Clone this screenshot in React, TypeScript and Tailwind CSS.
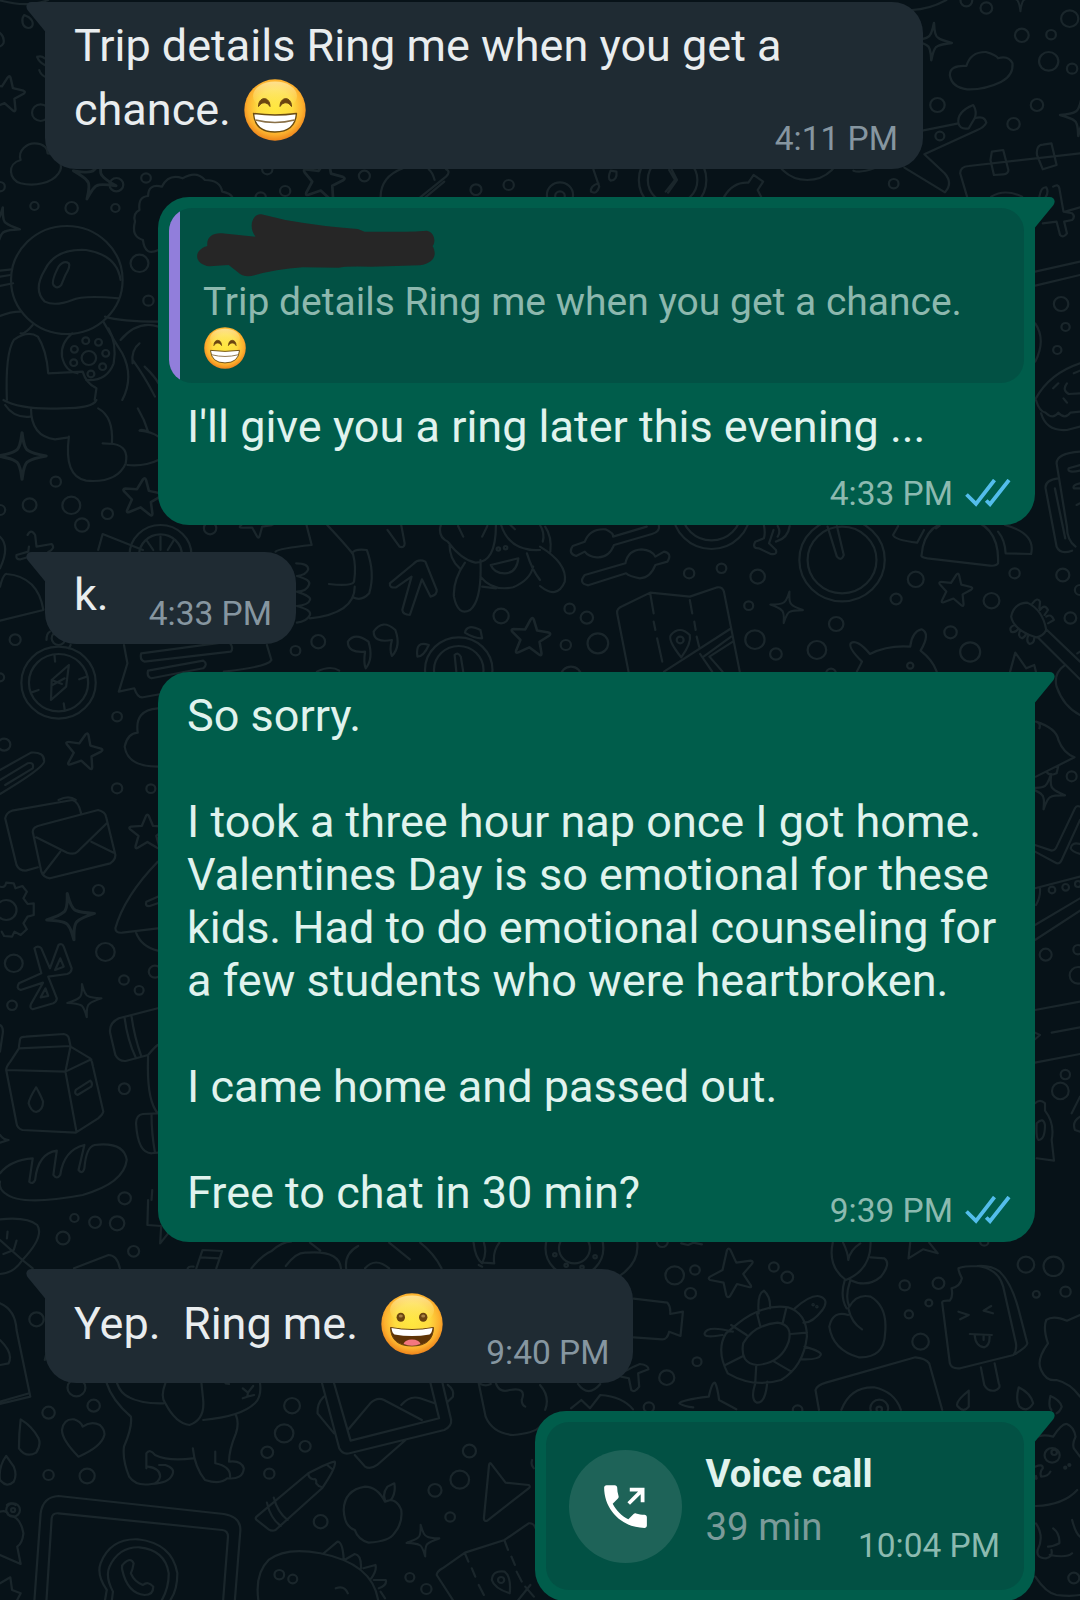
import type { ReactNode } from "react";

type Dot = [number, number, number];
type Mark = [number, number, number, number];

function Doodles({ transform, dots = [], stars = [], sparkles = [], paths = [] }: {
  transform: string;
  dots?: Dot[];
  stars?: Mark[];
  sparkles?: Mark[];
  paths?: string[];
}) {
  return (
    <g transform={transform}>
      {dots.map(([x, y, r]) => (
        <circle key={`${x}-${y}`} cx={x} cy={y} r={r} />
      ))}
      {stars.map(([x, y, r, a]) => (
        <path
          key={`${x}-${y}`}
          transform={`translate(${x} ${y}) rotate(${a}) scale(${r / 50})`}
          d="M-4-46Q0-54 4-46L15-19L44-17Q52-15 46-9L24 9L32 38Q33 46 26 42L0 26L-26 42Q-33 46-32 38L-24 9L-46-9Q-52-15-44-17L-15-19Z"
        />
      ))}
      {sparkles.map(([x, y, r, a]) => (
        <path
          key={`${x}-${y}`}
          transform={`translate(${x} ${y}) rotate(${a}) scale(${r / 50})`}
          d="M0-50Q4-14 14-11Q20-6 50 0Q20 6 14 11Q4 14 0 50Q-4 14-14 11Q-20 6-50 0Q-20-6-14-11Q-4-14 0-50Z"
        />
      ))}
      {paths.map((d) => (
        <path key={d} d={d} />
      ))}
    </g>
  );
}

function Wallpaper() {
  return (
    <svg
      className="absolute inset-0"
      width="1080"
      height="1600"
      viewBox="0 0 1080 1600"
      fill="none"
      stroke="#1a262b"
      strokeWidth="6.5"
      strokeLinecap="round"
      strokeLinejoin="round"
    >
      <Doodles
        transform="matrix(.3444 0 0 .3333 0 0)"
        dots={[
          [118, 338, 25], [338, 554, 20], [424, 534, 14], [208, 624, 18], [100, 618, 12], [335, 624, 12],
          [405, 790, 26], [431, 902, 15], [258, 1074, 21], [249, 1022, 10], [286, 1027, 10], [307, 1060, 10],
          [298, 1100, 10], [264, 1122, 10], [214, 1088, 10], [216, 1048, 10], [828, 573, 15], [1058, 528, 16],
          [1382, 569, 16], [1477, 555, 15], [776, 508, 15], [757, 592, 15], [0, 560, 14], [194, 840, 162],
        ]}
        stars={[[18, 282, 54, 10], [938, 540, 62, 12]]}
        sparkles={[[275, 535, 66, 20], [0, 680, 58, 8]]}
        paths={[
          "M70 45C60 60 65 82 82 84C98 82 100 65 84 52Z",
          "M-5 95Q15 110 10 130Q5 140-5 140",
          "M108 170Q112 185 130 195M130 175Q118 165 108 172M114 210Q118 225 134 232",
          "M60 480C50 450 80 430 100 430C130 430 140 450 138 460C175 460 185 500 170 520C150 550 100 560 60 550C25 540 20 490 60 480Z",
          "M460 750Q420 770 415 720Q380 710 392 665Q385 640 405 630Q400 590 430 588Q430 550 470 560Q490 520 530 535Q570 510 595 540Q640 540 645 575Q670 580 675 592",
          "M-5 0Q80 25 140 0",
          "M1105 592Q1105 530 1170 505M1220 592L1295 530Q1310 515 1295 508M1235 592L1290 545M1262 540Q1255 515 1245 508",
          "M350 840Q340 765 250 750Q160 745 130 810Q95 870 130 905Q160 920 210 900Q240 885 345 895",
          "M158 858Q145 850 170 800Q185 780 200 790Q205 800 190 825L178 855Q165 868 158 858Z",
          "M0 812L35 808M0 858L38 850M0 830L30 825",
          "M0 948Q30 935 60 935M300 965Q330 1020 355 1060Q390 1130 355 1200M95 975Q70 1005 60 1000",
          "M20 1200Q15 1060 40 1020Q80 990 110 1010Q135 1050 140 1120L240 1115Q250 1150 280 1165L275 1200",
          "M180 1070Q175 1030 210 1000M180 1070Q190 1115 225 1120M315 985Q340 1030 330 1090Q310 1145 250 1140",
          "M305 950Q350 965 460 965M350 1020Q400 960 460 980M385 1090Q380 1050 405 1030M420 1100Q450 1130 460 1150M385 1080Q420 1130 450 1190",
        ]}
      />
      <Doodles
        transform="matrix(.3444 0 0 .3333 540 0)"
        dots={[
          [1238, 2, 17], [1296, 24, 17], [1399, 106, 20], [1484, 104, 14], [1538, 56, 25], [1477, 184, 28],
          [1545, 206, 15], [1154, 315, 21], [1443, 315, 18], [1375, 372, 18], [1161, 408, 13], [1027, 551, 14],
          [58, 585, 38], [58, 588, 14], [385, 540, 98], [385, 540, 72], [776, 440, 100], [1513, 912, 21],
          [1526, 981, 12], [1502, 1050, 12],
        ]}
        sparkles={[[1140, 125, 56, 4], [1395, -12, 46, 0], [1568, 350, 58, 5]]}
        paths={[
          "M1080 30Q1130 28 1180 0",
          "M1238 198Q1250 155 1295 156Q1325 165 1330 175Q1360 165 1372 190Q1375 225 1340 245Q1290 270 1240 268Q1195 262 1190 225Q1190 195 1238 198Z",
          "M1110 392L1215 370Q1210 335 1258 315Q1270 335 1262 355Q1290 345 1296 368Q1290 382 1270 390L1116 463L1175 520Q1200 550 1176 577L1058 503M1215 370Q1220 390 1245 385L1262 355",
          "M1240 590L1220 520Q1220 500 1245 498L1568 460M1308 480L1312 455L1345 450L1360 510Q1360 522 1345 523L1318 525ZM1443 465Q1440 435 1460 434L1485 430L1500 495L1460 508ZM1310 590Q1350 565 1400 590",
          "M1490 560Q1505 550 1508 565L1520 635L1545 640Q1555 650 1545 660L1522 665L1530 700Q1520 715 1510 705L1500 665L1460 670M1450 590Q1455 560 1470 562Q1478 575 1468 592M1525 635L1568 622",
          "M1438 815L1568 785M1438 857L1568 825M1438 970Q1470 1020 1438 1085M1440 1195Q1480 1120 1568 1090M1530 1150Q1515 1170 1535 1182L1568 1180M1550 1120L1568 1112M1490 1165L1505 1150",
          "M155 508L172 560Q165 585 148 575Q145 558 170 550M205 512Q195 535 205 542Q225 540 222 515Z",
          "M535 590Q560 545 605 548L620 525L648 545L632 570L642 590M375 510L392 540L365 575M382 508L398 540L372 578",
          "M910 512Q930 520 970 505",
        ]}
      />
      <Doodles
        transform="matrix(.3444 0 0 .3333 0 400)"
        dots={[
          [162, 245, 15], [86, 315, 20], [207, 316, 26], [312, 341, 16], [238, 375, 20], [0, 330, 15],
          [44, 719, 16], [340, 950, 14], [12, 1034, 18], [340, 1165, 15], [438, 1166, 13], [0, 832, 12],
          [924, 725, 20], [858, 752, 14], [1455, 648, 22], [610, 385, 18], [170, 848, 108], [170, 848, 86],
          [170, 715, 20], [466, 465, 90], [466, 465, 62], [1332, 810, 98], [1332, 810, 72], [1447, 447, 5], [1468, 443, 5],
        ]}
        stars={[[412, 292, 58, 8], [242, 1054, 55, 12], [1540, 712, 58, 6], [745, 360, 50, 30]]}
        sparkles={[[64, 168, 70, 0]]}
        paths={[
          "M10 0Q60 30 180 25Q270 25 280 0M15 15Q40 55 88 50M90 25Q90 110 160 118L200 112M285 25Q330 50 325 130M200 110Q185 230 250 242Q340 250 365 190Q375 140 330 132L298 130M370 195Q420 200 460 180M400 25Q420 60 430 95Q410 85 405 92Q440 95 460 110",
          "M80 405Q90 385 102 405L106 440L150 432Q162 445 140 456M84 440L82 455L48 465Q45 480 60 478L80 472M0 410Q30 440 0 505M0 560Q10 520 20 522Q110 530 126 630L0 662",
          "M285 450L298 402L415 450M466 450V410M445 450L425 420M487 450L505 420",
          "M890 375L905 435Q810 445 800 455M950 375Q1000 430 1025 462Q1035 500 1028 545Q1020 560 955 552M860 490Q895 490 895 508Q890 525 862 528Q905 540 897 555Q890 575 862 575Q905 590 900 600Q895 615 862 618Q905 630 900 645Q890 665 862 668M900 655Q1030 640 1030 560M1022 460Q1030 445 1065 450Q1090 520 1072 580Q1050 605 1025 592",
          "M1125 390L1160 440Q1175 445 1175 430L1165 375M1132 550Q1130 565 1150 562L1195 530L1168 630Q1170 645 1190 645L1225 538L1250 590Q1270 585 1268 570L1235 485Q1215 475 1200 492Z",
          "M1280 375Q1270 410 1300 425Q1340 480 1380 488Q1440 490 1440 375M1330 378L1345 410M1415 378L1400 410M1455 375Q1480 455 1568 450M1482 375L1495 388M1305 430Q1305 480 1335 505M1425 495L1505 475Q1500 520 1465 520Q1435 520 1425 495ZM1350 488Q1315 540 1318 590Q1330 650 1365 630Q1400 600 1395 480M1395 530Q1430 575 1490 562Q1540 540 1548 500M1400 560L1440 565M1530 460Q1545 510 1568 540",
          "M360 735L370 790L345 875L390 865Q400 895 415 892L480 880M410 760L665 725Q680 745 670 755L420 785Q405 780 410 760ZM430 812L590 782Q605 792 590 805L440 835Q425 830 430 812ZM775 735L788 780Q780 800 650 815",
          "M1060 755Q1010 760 1010 725Q1030 695 1070 725Q1085 775 1062 805Q1055 790 1060 755ZM1138 720Q1085 730 1085 695Q1110 655 1148 690Q1165 740 1138 768Q1130 750 1138 720Z",
          "M1350 698Q1355 670 1395 690L1400 715Q1375 715 1350 698ZM1245 735Q1205 720 1212 770Q1230 770 1245 735ZM1320 765Q1330 755 1338 770L1345 815M1320 765L1325 815M920 815Q960 795 985 812",
          "M135 720Q135 700 145 695M205 735L200 745M148 900L150 840L200 795L192 860ZM150 840L180 852M152 855L188 835M90 878L112 870M230 838L252 830M158 765L160 785M185 910L188 930",
          "M458 1100Q370 1100 362 1040Q370 1000 400 998Q390 930 458 925M0 1110L90 1058Q130 1055 128 1085Q125 1105 0 1182M0 1140L80 1090Q100 1085 95 1105L15 1155M170 1200Q200 1185 220 1200",
        ]}
      />
      <Doodles
        transform="matrix(.3444 0 0 .3333 540 400)"
        dots={[
          [433, 520, 15], [527, 505, 14], [632, 530, 21], [86, 626, 15], [136, 653, 18], [75, 735, 15],
          [168, 730, 30], [606, 617, 13], [624, 719, 28], [685, 762, 17], [804, 750, 27], [860, 672, 21],
          [1034, 597, 16], [1091, 538, 23], [1311, 602, 23], [1192, 697, 18], [1249, 756, 29], [1378, 520, 15],
          [1518, 525, 19], [1540, 654, 17], [1568, 570, 15], [877, 480, 124], [877, 480, 100], [498, 335, 112],
          [498, 335, 86], [407, 720, 10], [1075, 797, 9], [845, 820, 14], [90, 830, 30],
        ]}
        stars={[[1205, 570, 50, 10]]}
        sparkles={[[716, 622, 48, 10]]}
        paths={[
          "M345 375Q350 395 325 402L215 435Q200 475 165 472Q140 470 130 455L105 468Q80 460 95 438L130 425Q145 385 190 388Q215 400 212 410L310 380",
          "M130 525L248 490Q255 450 295 448Q325 450 335 470L360 455Q385 460 370 485L335 495Q320 535 290 535Q260 530 250 520L140 556Q110 550 130 525Z",
          "M0 440Q80 490 72 545Q50 600 0 558M15 380Q35 410 30 455M0 375Q15 400 8 425",
          "M650 375Q655 400 650 415L625 425Q615 445 635 445L670 462Q690 465 685 450L665 430L678 390M690 378Q700 395 690 410M725 378Q720 415 685 425M835 380L862 470Q875 485 882 465L862 378",
          "M1040 378L1025 405Q1030 420 1095 428L1115 390M1108 465Q1115 360 1230 355Q1335 370 1330 490Q1325 500 1300 496L1125 475Q1105 472 1108 465ZM1350 375Q1440 400 1426 462L1352 460Q1350 420 1330 395M1160 378L1150 385",
          "M257 815L224 640Q222 625 240 618L320 578L435 590L515 562Q530 560 534 575L580 815M320 580L330 640M330 665L335 690M340 715L355 785M435 600L442 640M448 665L452 690M455 710L462 740M360 815L552 687M465 762L500 815M492 770L530 815M475 770L555 710M492 770L560 725M410 772Q370 720 380 705Q405 675 435 705Q440 730 410 772Z",
          "M920 815L935 785Q895 745 902 730Q920 715 958 762Q1010 735 1075 740Q1080 695 1108 688Q1135 700 1105 752Q1140 780 1152 815",
          "M1440 0Q1450 35 1468 38Q1490 60 1505 38Q1525 60 1540 38L1568 35M1455 40Q1470 95 1530 90L1568 80M1520 -5L1530 8",
          "M1568 155Q1500 160 1500 190L1530 380Q1530 420 1555 440M1568 195L1535 205Q1530 220 1568 212M1568 250Q1545 255 1550 265L1568 265M1505 235Q1465 240 1468 265L1500 440Q1510 465 1545 452M1495 265L1525 415M1568 310L1558 315",
          "M1368 650Q1375 610 1415 608Q1460 630 1470 690Q1460 710 1440 712Q1375 690 1368 650ZM1430 610Q1445 590 1452 605L1450 625M1452 630Q1465 610 1475 630L1465 645M1470 650Q1485 640 1492 660L1475 670M1380 675Q1360 680 1368 695Q1380 700 1390 685M1395 690Q1385 710 1400 715Q1410 710 1412 700M1418 705Q1410 725 1422 732Q1435 730 1435 715M1445 712L1568 838M1472 690L1568 785M1525 795Q1490 820 1500 860Q1520 920 1568 945M1560 760L1568 755M1365 815L1380 758L1412 805L1435 795L1440 815",
          "M1440 965Q1500 985 1505 1020Q1520 1060 1552 1072L1440 1130M1470 1115Q1480 1130 1500 1120L1505 1098M1440 965Q1455 970 1450 985",
        ]}
      />
      <Doodles
        transform="matrix(.3444 0 0 .3333 0 800)"
        dots={[
          [286, 271, 16], [18, 330, 30], [40, 490, 26], [306, 456, 27], [360, 540, 14], [404, 571, 13],
          [35, 616, 14], [450, 515, 18], [361, 866, 16], [362, 1195, 18],
        ]}
        stars={[[428, 98, 54, 0]]}
        sparkles={[[205, 350, 70, -8], [245, 602, 50, -8]]}
        paths={[
          "M110 202L75 212Q55 212 48 195L15 55Q18 38 35 32L210 0Q228 5 235 38M120 75L285 30Q305 35 308 50L335 165Q335 180 320 190L145 235Q125 232 120 215L95 95Q95 80 120 75ZM105 112L195 158Q215 165 225 155L310 70M125 222L175 155M265 125L330 158",
          "M0 260Q15 265 18 248L40 250L45 265L65 258L78 275L68 295L80 312L98 310L98 345L80 350L68 370L78 388L60 405L42 395L35 410L12 408L5 395",
          "M458 185Q360 290 335 385Q335 400 355 398L458 385M458 290L425 305Q420 320 435 318L458 310M395 398Q410 440 458 452",
          "M100 445Q110 435 120 445L145 505L170 435Q180 428 185 440L208 505Q208 518 195 522L140 530L165 595Q165 605 155 610L95 628Q85 625 90 612L125 548L60 570Q45 565 55 550L120 520ZM160 510L175 475L185 500ZM118 592L132 565L140 588Z",
          "M0 675Q10 680 8 700L0 755M55 740L58 718Q60 710 75 710L185 702Q198 705 200 715L205 740L262 775Q268 785 270 800L300 935Q298 945 285 955L220 998L65 990Q50 985 48 970L18 810Q18 800 30 785L55 745ZM55 745L205 738L190 815L18 810M190 815L222 995M190 815L265 778M105 862Q85 895 83 910Q90 935 105 936Q125 930 125 905Q120 890 105 862ZM220 870L262 842Q270 850 265 860L225 885Q215 882 220 870Z",
          "M0 1005Q10 1020 25 1020L0 1028M0 1120Q30 1080 95 1075L85 1145Q95 1155 102 1140Q110 1060 165 1052Q158 1100 155 1125Q165 1140 175 1125Q185 1050 245 1035L228 1110Q240 1125 245 1105Q250 1040 275 1035Q360 1025 368 1080Q360 1150 240 1185Q60 1220 15 1180Q-5 1165 0 1145",
          "M458 625L345 655Q315 670 320 700L335 765Q345 785 365 783L430 765Q450 740 458 735M362 655Q370 720 395 775M382 650Q390 710 410 768M430 770Q425 900 458 940M458 940L415 942Q395 945 395 970Q400 1060 440 1060L458 1058M440 945Q440 1000 450 1058M440 1200L442 1170",
        ]}
      />
      <Doodles
        transform="matrix(.3444 0 0 .3333 0 1200)"
        dots={[
          [216, 54, 12], [276, 67, 17], [340, 70, 21], [183, 114, 19], [388, 154, 16], [106, 358, 21],
          [222, 563, 26], [141, 638, 18], [272, 617, 18], [141, 825, 15], [253, 828, 22],
          [848, 617, 23], [825, 700, 27], [886, 739, 16], [776, 757, 17], [782, 821, 15], [931, 965, 20],
          [1363, 753, 19], [1335, 839, 27], [1263, 871, 19], [1307, 951, 14], [1190, 1132, 13], [1238, 1167, 15],
          [811, 1124, 14], [850, 1137, 13], [38, 930, 6], [38, 930, 20], [1455, 1140, 9],
        ]}
        sparkles={[[1228, 1022, 48, -8]]}
        paths={[
          "M0 58Q80 50 108 75Q130 110 65 180Q40 220 0 222M0 120L65 180L95 205M40 150L48 122M40 150L10 162M20 115L22 95M215 205L315 165Q340 165 348 205M430 0L428 75L468 78L465 130L500 85",
          "M570 205L588 150L645 153L628 205M582 172L638 175M545 205Q548 198 562 200M730 205Q760 165 790 152Q820 125 845 125M830 198Q860 155 890 158Q985 150 990 205M1005 205Q1000 160 1040 138M900 128L930 152M1060 205Q1090 170 1130 205M1130 128L1190 178M1220 128Q1260 160 1282 205M1375 128Q1380 175 1400 190Q1415 160 1405 128M1450 128Q1430 155 1435 190L1405 188M1390 195L1400 200",
          "M0 310Q45 330 48 390L88 590L0 612M0 605L85 580M0 420Q40 460 25 490L0 495M135 460L130 480",
          "M310 550Q325 600 380 650Q385 680 360 740Q355 780 375 830Q395 860 440 852Q490 850 500 825Q510 805 480 795L462 795M425 805L425 760Q435 745 450 765Q490 785 560 775M560 745Q565 800 595 840Q640 855 660 835Q705 840 708 805Q700 780 665 785Q665 750 685 700Q695 670 685 645M370 590Q410 612 475 610M340 550Q350 580 375 592M480 550Q465 590 480 610Q510 670 550 675Q595 660 590 600L585 550M590 660Q700 650 740 610Q760 590 755 550M625 755L625 790Q670 800 668 830M430 800Q465 805 465 830Q460 850 440 852M705 565L720 578L735 558M720 578L718 590L705 595M718 590L738 585M655 550L665 552",
          "M228 770Q180 720 180 690Q185 655 215 658Q235 665 240 680Q265 662 290 675Q305 690 303 705Q295 740 228 770ZM60 658Q55 700 55 745Q75 775 105 758Q120 735 112 715Q95 680 60 658ZM18 768Q-5 800 0 840Q20 865 40 845Q50 825 40 800Z",
          "M935 550L985 745Q995 765 1015 760L1290 690Q1312 680 1310 660L1285 550M970 550L1018 722L1275 655L1250 550M1010 690L1075 610Q1095 590 1115 600L1225 660M1165 615Q1190 585 1220 595L1262 610M940 590Q920 610 922 640L970 700M1030 765L1060 800Q1075 810 1095 795L1180 718M1300 555Q1320 570 1315 590L1300 605",
          "M1390 550L1410 650Q1430 700 1490 705Q1550 700 1568 680M1440 550Q1450 580 1480 570Q1530 560 1515 600Q1515 615 1525 620M1395 552Q1410 560 1425 552M1545 780Q1540 795 1550 805",
          "M745 950L895 820Q960 785 972 785Q978 800 935 865L800 990Q790 995 780 988L745 960Q740 955 745 950ZM775 908Q785 955 815 978M795 893Q805 935 835 960M895 820Q895 835 910 838Q920 835 918 850Q925 860 935 862M950 795L965 808",
          "M1118 900Q1110 880 1125 860L1145 850Q1150 880 1135 900L1118 905ZM1118 905Q1095 860 1060 860Q1000 870 998 930Q1000 980 1030 990Q1040 1020 1070 1028Q1130 1025 1145 1000Q1170 970 1165 930Q1150 890 1118 905ZM1425 790L1468 848L1535 855Q1542 860 1535 865L1415 962Q1405 965 1405 955L1420 795Q1422 788 1425 790Z",
          "M100 1200L118 940Q125 890 170 888L650 942Q698 950 698 990L682 1200M135 1200L150 955Q152 938 170 940L645 990Q662 992 662 1010L648 1200",
          "M305 1200L310 1170Q280 1125 292 1090Q320 1015 400 1018Q500 1030 515 1120Q515 1170 495 1200M325 1200L328 1175Q305 1130 318 1100Q345 1040 405 1042Q480 1050 490 1120Q490 1165 470 1200M360 1090Q380 1070 388 1090Q385 1110 380 1120Q390 1145 415 1155Q430 1142 445 1160Q445 1185 420 1185Q370 1180 355 1110Q352 1095 360 1090Z",
          "M20 915Q30 905 45 915M0 935Q20 930 25 945Q60 950 68 1000Q65 1030 50 1040L60 1092L0 1065M0 1150L30 1132L35 1170L60 1180L50 1200",
          "M750 1200Q740 1120 780 1080Q830 1040 930 1060Q1080 1090 1098 1200M940 1060L980 1025Q995 1025 998 1078M1000 1080L1030 1062Q1050 1065 1048 1105M1055 1105L1090 1095Q1095 1110 1078 1135M1085 1140L1120 1140Q1125 1155 1100 1165M1105 1175L1118 1195M975 1165Q1000 1155 1010 1180",
          "M1315 1200L1268 1125Q1268 1115 1285 1105L1350 1058L1465 1020L1535 970Q1550 968 1555 985M1350 1060L1360 1085M1370 1105L1380 1130M1390 1155L1405 1185M1465 1022L1475 1050M1485 1070L1495 1095M1500 1115L1515 1145M1480 1180Q1485 1130 1465 1115Q1430 1110 1428 1140Q1435 1165 1480 1180ZM1505 1200L1540 1155M1525 1160L1550 1190",
        ]}
      />
      <Doodles
        transform="matrix(.3444 0 0 .3333 540 1200)"
        dots={[
          [391, 226, 27], [450, 210, 14], [437, 280, 16], [679, 201, 14], [718, 232, 17], [456, 485, 13],
          [368, 533, 22], [1059, 256, 15], [1157, 250, 17], [1129, 309, 10], [1071, 343, 12], [1105, 425, 24],
          [1411, 194, 24], [1491, 199, 29], [1441, 283, 10], [1526, 275, 15], [985, 625, 26], [985, 628, 8],
          [1550, 1134, 16], [1487, 766, 22], [1493, 757, 8], [316, 622, 15], [748, 630, 14], [100, 145, 84],
          [100, 145, 45], [43, 164, 5], [76, 196, 5], [122, 202, 5], [160, 170, 5], [355, 125, 16], [1290, 125, 12],
          [793, 314, 2], [804, 320, 2], [1525, 803, 3], [1537, 795, 3],
        ]}
        paths={[
          "M543 150Q548 142 553 150L570 188L612 182Q622 184 614 193L590 222L612 256Q616 264 606 261L572 252L552 288Q545 296 541 286L533 248L494 240Q486 236 494 230L530 210Z",
          "M282 125Q290 185 235 225M410 130L430 135L445 128L470 133M1075 128L1070 175L1112 148L1155 160L1130 128M272 296L370 308Q380 320 378 342L415 335L408 408L375 395Q370 418 355 418L272 412",
          "M575 370Q650 310 720 322Q775 340 775 410Q765 500 700 540Q620 565 545 520Q510 450 540 400ZM590 430Q620 375 690 368Q735 375 722 425Q700 490 630 495Q580 490 590 430ZM630 340L640 380M715 325L705 368M775 398L728 402M730 515L680 485M625 548L628 495M538 495L590 468M555 375L600 405M635 340Q630 280 650 272Q670 290 668 325M530 405Q475 415 478 400Q485 375 560 395M740 325Q790 280 815 290Q840 300 820 330Q790 370 765 368M768 440Q820 455 815 465Q810 480 760 478M625 550Q610 600 630 608Q655 610 660 545",
          "M850 128Q835 200 888 240Q960 210 960 128M880 128Q895 160 895 180Q900 150 930 130M960 172L1000 175Q1020 190 990 230Q950 265 900 240M885 240Q870 290 890 325M900 245Q885 290 898 320Q920 280 960 290Q1010 320 1002 400Q1000 475 925 472Q850 450 840 380Q850 330 895 345M895 325Q905 370 935 388",
          "M1215 205Q1230 198 1270 198Q1330 205 1345 260L1382 430Q1385 450 1375 465L1220 505Q1195 508 1190 490L1168 310Q1165 300 1190 302Q1200 290 1195 265Q1220 260 1225 235Q1215 215 1215 205ZM1270 198Q1310 195 1335 215Q1370 250 1390 330L1415 430Q1415 440 1380 462M1215 335L1245 345L1220 358M1310 318L1288 332L1315 340M1248 402L1312 405M1262 405Q1265 440 1290 442Q1308 435 1305 405M1288 405V420M1280 502L1290 555Q1300 575 1320 572Q1340 565 1332 550L1320 490",
          "M810 630L800 570Q805 555 830 548L1090 472Q1120 475 1130 490L1168 630M875 630Q900 560 970 562Q1030 575 1048 630M405 610Q410 600 490 590Q500 545 508 548Q515 560 520 600L570 628M405 610Q420 620 445 622M245 515L272 500L290 492Q315 495 315 508L285 520L288 560Q275 580 265 570L258 535L235 530M90 625L120 600L145 625L175 585Q240 590 270 628M110 552Q140 595 175 552M0 555Q30 590 15 630",
          "M1245 572Q1205 605 1212 618Q1230 640 1245 620ZM1390 562Q1380 600 1392 620Q1415 640 1432 610Q1425 580 1390 562ZM1482 588Q1475 620 1485 630M1482 588Q1510 600 1515 620Q1510 635 1500 640M1568 345L1530 362Q1490 345 1470 360Q1460 385 1475 430Q1440 480 1455 510Q1470 545 1500 540Q1540 550 1568 590",
          "M1438 715Q1455 700 1490 710Q1515 670 1530 672Q1550 680 1555 710Q1545 730 1550 745L1568 770M1438 800Q1460 790 1460 805Q1450 815 1455 830Q1475 830 1482 815M1440 828Q1445 840 1438 835M1440 918Q1520 915 1560 870M1440 970Q1465 1010 1445 1050Q1440 1075 1470 1075Q1490 1070 1485 1050M1545 960Q1555 1000 1568 1010M1490 985Q1510 1000 1508 1030Q1490 1040 1475 1040M1480 1065Q1530 1075 1545 1060M1438 1130Q1470 1180 1500 1185Q1540 1190 1568 1185",
        ]}
      />
      {/* strip right of the long message */}
      <Doodles
        transform="matrix(.3333 0 0 .3333 1020 640)"
        dots={[
          [155, 409, 15], [96, 750, 10], [137, 742, 10], [174, 732, 9], [77, 944, 18], [174, 929, 14],
          [174, 1006, 25], [136, 1304, 14], [121, 1353, 25],
        ]}
        sparkles={[[82, 455, 54, 12]]}
        paths={[
          "M45 615L95 632Q105 632 110 620L165 505Q170 495 180 500M45 635L110 670Q120 672 125 660L180 540M180 612Q155 605 152 625Q155 635 180 642M45 745L180 710M60 745Q62 770 48 795M45 855L180 775M45 900L180 812",
          "M45 1110L180 1085M45 1268L180 1242M95 1178L180 1162M45 1178L60 1185L45 1198M45 1390Q60 1375 75 1390L75 1412Q105 1450 95 1500L102 1562L50 1555M50 1450Q70 1430 75 1455Q75 1500 55 1500Q48 1495 50 1450M180 1370L155 1420M180 1430Q155 1445 165 1470L180 1475",
        ]}
      />
    </svg>
  );
}

function Face({ size, open = false }: { size: string; open?: boolean }) {
  return (
    <svg className={`${size} shrink-0`} viewBox="0 0 62 62">
      <defs>
        <radialGradient id="face" cx=".5" cy=".45" r=".56">
          <stop offset="0" stopColor="#ffe83f" />
          <stop offset=".5" stopColor="#fedc40" />
          <stop offset=".8" stopColor="#fcb02e" />
          <stop offset="1" stopColor="#ec801a" />
        </radialGradient>
        <linearGradient id="shine" x1="0" y1="0" x2="0" y2="1">
          <stop offset="0" stopColor="#fff0b8" stopOpacity=".7" />
          <stop offset="1" stopColor="#ffe95a" stopOpacity="0" />
        </linearGradient>
      </defs>
      <circle cx="31" cy="31" r="30.7" fill="url(#face)" />
      <ellipse cx="31" cy="17" rx="22" ry="14.5" fill="url(#shine)" />
      {open ? (
        <>
          <ellipse cx="19.8" cy="24.3" rx="4.2" ry="4.5" fill="#6b4410" />
          <ellipse cx="42.2" cy="24.3" rx="4.2" ry="4.5" fill="#6b4410" />
          <ellipse cx="19.8" cy="23" rx="2" ry="1.5" fill="#a98345" />
          <ellipse cx="42.2" cy="23" rx="2" ry="1.5" fill="#a98345" />
          <path d="M9.5 34.5Q31 38.5 52.5 34.5Q52 53 31 53Q10 53 9.5 34.5Z" fill="#5f3406" stroke="#6b4410" strokeWidth="1" />
          <path d="M10.5 35Q31 39 51.5 35Q51 40 48.5 41.5Q31 44.5 13.5 41.5Q11 40 10.5 35Z" fill="#fff" />
          <path d="M22.5 51Q24 46.5 31 46.5Q38 46.5 39.5 51Q35 52.8 31 52.8Q27 52.8 22.5 51Z" fill="#f4777f" />
        </>
      ) : (
        <>
          <path d="M14.5 27.5C14.5 17 26 17 26 27.5C23 22.5 17.5 22.5 14.5 27.5Z" fill="#6b4410" stroke="#6b4410" strokeLinejoin="round" />
          <path d="M36 27.5C36 17 47.5 17 47.5 27.5C44.5 22.5 39 22.5 36 27.5Z" fill="#6b4410" stroke="#6b4410" strokeLinejoin="round" />
          <path d="M9.5 34.5Q31 37.5 52.5 34.5Q51 53 31 53Q11 53 9.5 34.5Z" fill="#fff" stroke="#6b4d12" strokeWidth="1.4" strokeLinejoin="round" />
          <path d="M11.5 41Q31 46 50.5 41" fill="none" stroke="#8a7148" strokeWidth="1.4" />
        </>
      )}
    </svg>
  );
}

function Ticks() {
  return (
    <svg className="mt-[5px] ml-[12px] h-7 w-[46px]" viewBox="0 0 46 28" fill="none" stroke="#53bdeb" strokeWidth="3.8">
      <path d="M1.5 15.5L11 24.8L29.5 1M21.2 21.5L25 25.2L44 1" />
    </svg>
  );
}

function Time({ children, mine = false }: { children: ReactNode; mine?: boolean }) {
  return (
    <span
      className={`shrink-0 self-end text-[33.5px] leading-[40px] whitespace-nowrap ${mine ? "text-[#8cbab0]" : "text-[#8696a0]"}`}
    >
      {children}
    </span>
  );
}

function Bubble({ children, className, mine = false }: { children: ReactNode; className: string; mine?: boolean }) {
  return (
    <div
      className={`relative rounded-[31px] ${mine ? "mr-[45px] self-end rounded-tr-none bg-[#005d4b] text-[#e0f3ee]" : "ml-[45px] self-start rounded-tl-none bg-[#1f2b33] text-[#e9edef]"} ${className}`}
    >
      <svg
        className={`absolute top-0 h-[31px] w-[21px] ${mine ? "-right-[20px]" : "-left-[19px] -scale-x-100"}`}
        viewBox="0 0 21 31"
        fill={mine ? "#005d4b" : "#1f2b33"}
      >
        <path d="M0 0H15.5C20 0 22 4 19.5 8L1 30.5H0Z" />
      </svg>
      {children}
    </div>
  );
}

function App() {
  return (
    <div className="relative h-[1600px] w-[1080px] overflow-hidden bg-[#071218] font-['Roboto','Liberation_Sans',sans-serif]">
      <Wallpaper />
      <div className="relative flex flex-col pt-0.5 text-[45px] leading-[53px]">
        <Bubble className="flex h-[167px] w-[878px] pt-[17px] pr-[25px] pb-[10px] pl-[29px]">
          <div className="min-w-0 flex-1 whitespace-nowrap">
            <p>Trip details Ring me when you get a</p>
            <div className="mt-[7px] flex items-center gap-[13px]">
              <p className="-mt-0.5">chance.</p>
              <Face size="size-[62px]" />
            </div>
          </div>
          <Time>4:11 PM</Time>
        </Bubble>

        <Bubble mine className="mt-7 flex h-[328px] w-[877px] flex-col pt-[11px]">
          <div className="mx-[11px] flex h-[175px] overflow-hidden rounded-[23px] bg-[#025144]">
            <div className="w-[11px] shrink-0 bg-[#917edb]" />
            <div className="pl-[17px]">
              <svg className="mt-1.5 h-[63px] w-[239px]" viewBox="573 642 694 189" preserveAspectRatio="none" fill="#262626">
                <path d="M603 738C600 710 620 698 645 700L743 710C720 680 735 640 760 643L830 660Q940 680 1040 687L1060 695L1160 695Q1200 696 1240 692C1262 695 1268 725 1257 738C1272 765 1260 790 1220 796L1080 800Q1000 798 985 803L880 802Q800 808 740 826Q710 835 690 815L665 795L610 799C565 795 560 750 603 738Z" />
              </svg>
              <p className="mt-[2px] pl-1.5 text-[39px] leading-[46px] whitespace-nowrap text-[#8db8ae]">
                Trip details Ring me when you get a chance.
              </p>
              <div className="mt-[2px] pl-[7px]">
                <Face size="size-[42px]" />
              </div>
            </div>
          </div>
          <p className="mt-[17px] pl-[29px] whitespace-nowrap">I'll give you a ring later this evening ...</p>
          <div className="mt-auto flex justify-end pr-6 pb-[11px]">
            <Time mine>4:33 PM</Time>
            <Ticks />
          </div>
        </Bubble>

        <Bubble className="mt-[27px] flex h-[92px] w-[251px] justify-between pt-[16px] pr-6 pb-[10px] pl-[29px]">
          <p>k.</p>
          <Time>4:33 PM</Time>
        </Bubble>

        <Bubble mine className="mt-7 flex h-[570px] w-[877px] pt-[17px] pr-6 pb-[11px] pl-[29px]">
          <div className="min-w-0 flex-1 whitespace-pre">
            <p>So sorry.</p>
            <p className="mt-[53px]">
              I took a three hour nap once I got home.{"\n"}
              Valentines Day is so emotional for these{"\n"}
              kids. Had to do emotional counseling for{"\n"}
              a few students who were heartbroken.
            </p>
            <p className="mt-[53px]">I came home and passed out.</p>
            <p className="mt-[53px]">Free to chat in 30 min?</p>
          </div>
          <div className="flex self-end">
            <Time mine>9:39 PM</Time>
            <Ticks />
          </div>
        </Bubble>

        <Bubble className="mt-[27px] flex h-[114px] w-[587.5px] justify-between pt-6 pr-[23px] pb-[10px] pl-[29px]">
          <div className="flex h-[62px] items-center gap-[23px] whitespace-pre">
            <p className="-mt-0.5">Yep.  Ring me.</p>
            <Face size="size-[62px]" open />
          </div>
          <Time>9:40 PM</Time>
        </Bubble>

        <Bubble mine className="mt-7 h-[190px] w-[500.5px] p-[11px]">
          <div className="flex h-[168px] rounded-[23px] bg-[#025144] pr-6 pl-[23px]">
            <div className="mt-7 flex size-[113px] shrink-0 items-center justify-center rounded-full bg-[#1e6358]">
              <svg className="size-[57px]" viewBox="0 0 24 24" fill="#fff">
                <path d="M6.62 10.79c1.44 2.83 3.76 5.14 6.59 6.59l2.2-2.2c.27-.27.67-.36 1.02-.24 1.12.37 2.33.57 3.57.57.55 0 1 .45 1 1V20c0 .55-.45 1-1 1-9.39 0-17-7.61-17-17 0-.55.45-1 1-1h3.5c.55 0 1 .45 1 1 0 1.25.2 2.45.57 3.57.11.35.03.74-.25 1.02l-2.2 2.2z" />
                <path d="M13.8 4.1H20V10.2H18.4V6.8L13.9 11.3L12.8 10.2L17.3 5.7H13.8Z" />
              </svg>
            </div>
            <div className="mt-[25px] ml-6 min-w-0 flex-1 text-[38.4px] leading-[53px] whitespace-nowrap">
              <p className="font-bold">Voice call</p>
              <p className="text-[#7b9b99]">39 min</p>
            </div>
            <div className="flex pb-6">
              <Time mine>10:04 PM</Time>
            </div>
          </div>
        </Bubble>
      </div>
    </div>
  );
}

export default App;
